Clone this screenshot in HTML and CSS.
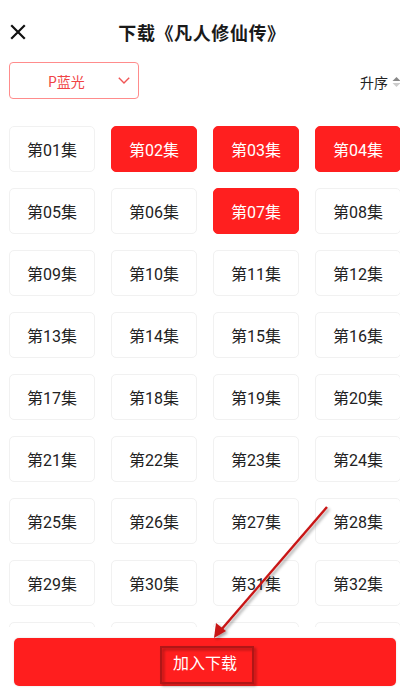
FILE: index.html
```html
<!DOCTYPE html>
<html lang="zh-CN">
<head>
  <meta charset="UTF-8" />
  <meta name="viewport" content="width=device-width, initial-scale=1" />
  <title>下载</title>
  <link rel="stylesheet" href="styles.css">
</head>
<body>

<div class="page">
  <!-- Header -->
  <div class="header">
    <svg class="close-icon" width="16" height="16" viewBox="0 0 16 16">
      <path d="M2 2 L14 14 M14 2 L2 14" stroke="#111" stroke-width="2.2" stroke-linecap="square" fill="none"/>
    </svg>
    <div class="title">下载《凡人修仙传》</div>
  </div>

  <!-- Source + sort -->
  <div class="toolbar">
    <div class="source-select">
      <span>P蓝光</span>
      <svg width="12" height="7" viewBox="0 0 12 7">
        <polyline points="0.8,0.8 6,6 11.2,0.8" stroke="#f05555" stroke-width="1.4" fill="none"/>
      </svg>
    </div>
    <div class="sort">
      <span>升序</span>
      <svg width="9" height="12" viewBox="0 0 9 12">
        <polygon points="4.5,1 8.5,5 0.5,5" fill="#888"/>
        <polygon points="4.5,11 8.5,7 0.5,7" fill="#ccc"/>
      </svg>
    </div>
  </div>

  <!-- Episodes -->
  <div class="episodes">
    <div class="ep-grid" id="ep-grid"></div>
  </div>

  <div class="footer">
    <button class="add-btn">加入下载</button>
  </div>

  <!-- annotation overlay -->
  <svg class="annotation" width="400" height="699" viewBox="0 0 400 699">
    <defs>
      <filter id="shadow" x="-20%" y="-20%" width="140%" height="140%">
        <feDropShadow dx="2" dy="2" stdDeviation="1.5" flood-color="#000" flood-opacity="0.35"/>
      </filter>
    </defs>
    <g filter="url(#shadow)">
      <line x1="327" y1="507" x2="221" y2="630" stroke="#c81414" stroke-width="2.4"/>
      <polygon points="214,638 216,623 226,631" fill="#c81414"/>
      <rect x="161" y="647" width="92" height="36" fill="none" stroke="#b01212" stroke-width="2"/>
    </g>
  </svg>
</div>

<script>
  const selected = [2, 3, 4, 7];
  const visibleCount = 32;
  const grid = document.getElementById("ep-grid");

  for (let i = 1; i <= 36; i++) {
    const cell = document.createElement("div");
    cell.className = "ep";
    if (selected.includes(i)) cell.classList.add("active");
    if (i <= visibleCount) cell.textContent = `第${String(i).padStart(2, '0')}集`;
    grid.appendChild(cell);
  }
</script>
</body>
</html>
```

FILE: styles.css
```css
html, body {
  margin: 0;
  padding: 0;
  background: #fff;
  overflow: hidden;
}

body {
  font-family: "Noto Sans CJK SC", "Noto Sans", Roboto, sans-serif;
  color: #222;
}

.page {
  position: relative;
  width: 400px;
  height: 699px;
  display: flex;
  flex-direction: column;
}

.header {
  position: relative;
  height: 62px;
  padding-top: 2px;
  box-sizing: border-box;
  display: flex;
  align-items: center;
  justify-content: center;
}
.close-icon {
  position: absolute;
  left: 10px;
  top: 24px;
}
.title {
  font-size: 18px;
  font-weight: bold;
  letter-spacing: 0.6px;
  color: #1a1a1a;
  padding-left: 4px;
}

.toolbar {
  height: 37px;
  display: flex;
  align-items: center;
  justify-content: space-between;
  padding-left: 9px;
  margin-right: -1px;
}
.source-select {
  width: 130px;
  height: 37px;
  box-sizing: border-box;
  border: 1px solid #ff8c8c;
  border-radius: 4px;
  display: flex;
  align-items: center;
  justify-content: space-between;
  padding: 0 8px 0 38px;
  color: #f04545;
  font-size: 14px;
}
.sort {
  display: flex;
  align-items: center;
  gap: 4px;
  font-size: 14px;
  color: #222;
  margin-top: 2px;
}

.episodes {
  margin-top: 27px;
  height: 501px;
  overflow: hidden;
}
.ep-grid {
  display: grid;
  grid-template-columns: repeat(4, 86px);
  grid-auto-rows: 46px;
  gap: 16px;
  padding-left: 9px;
}
.ep {
  border: 1px solid #f1f1f1;
  border-radius: 5px;
  display: flex;
  align-items: center;
  justify-content: center;
  font-family: Roboto, "Noto Sans CJK SC", sans-serif;
  font-size: 16px;
  color: #222;
}
.ep.active {
  background: #ff1f1f;
  border-color: #ff1f1f;
  color: #fff;
}

.footer {
  margin-top: 11px;
  padding: 0 4px 0 14px;
}
.add-btn {
  width: 100%;
  height: 48px;
  border: none;
  border-radius: 5px;
  background: #ff1e1e;
  color: #fff;
  font-family: inherit;
  font-size: 16px;
  padding: 0;
  box-shadow: 0 0 2px rgba(0, 0, 0, 0.15);
}

.annotation {
  position: absolute;
  left: 0;
  top: 0;
  pointer-events: none;
}
```
